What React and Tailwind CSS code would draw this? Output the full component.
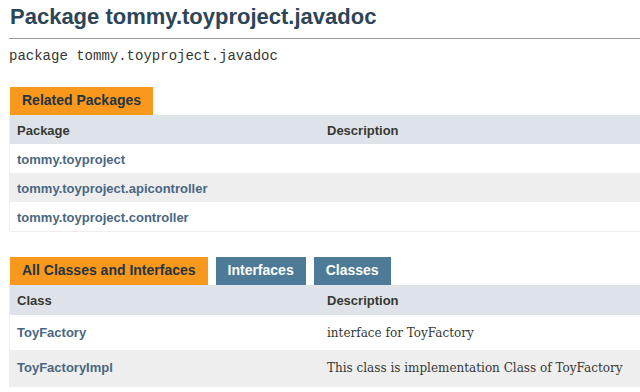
export default function App() {
  const sans = { fontFamily: '"Liberation Sans", Arial, sans-serif' };
  return (
    <div className="w-[640px] h-[392px] overflow-hidden bg-white pl-[9px]" style={sans}>
      <h1 className="mt-[6px] pl-[1px] text-[22px] leading-[22px] font-bold text-[#2c4557] whitespace-nowrap">
        Package tommy.toyproject.javadoc
      </h1>
      <div className="mt-[10px] h-px bg-[#9a9a9a] w-[700px]" />
      <div className="mt-[7px] text-[14px] leading-[20px] text-[#353833] whitespace-nowrap font-['Liberation_Mono',monospace]">
        package tommy.toyproject.javadoc
      </div>

      <div className="mt-[21px] flex pl-[1px]">
        <div className="h-[28px] px-[12px] pt-[5px] text-[14px] leading-[16px] font-bold bg-[#f8981d] text-[#253441] whitespace-nowrap">
          Related Packages
        </div>
      </div>
      <div className="w-[720px] border-l border-b border-[#eeeeee]">
        <div className="grid grid-cols-[310px_1fr] h-[29px] bg-[#dee3e9] text-[13px] leading-[15px] font-bold text-[#353833]">
          <div className="pl-[7px] pt-[8px]">Package</div>
          <div className="pl-[7px] pt-[8px]">Description</div>
        </div>
        {[
          ['tommy.toyproject', 'bg-white'],
          ['tommy.toyproject.apicontroller', 'bg-[#eeeeef]'],
          ['tommy.toyproject.controller', 'bg-white'],
        ].map(([name, bg]) => (
          <div key={name} className={`grid grid-cols-[310px_1fr] h-[29px] ${bg} text-[13px] leading-[15px] font-bold text-[#4a6782]`}>
            <div className="pl-[7px] pt-[8px] whitespace-nowrap">{name}</div>
            <div />
          </div>
        ))}
      </div>

      <div className="mt-[25px] flex gap-[8px] pl-[1px]">
        <div className="h-[28px] px-[12px] pt-[5px] text-[14px] leading-[16px] font-bold bg-[#f8981d] text-[#253441] whitespace-nowrap">
          All Classes and Interfaces
        </div>
        <div className="h-[28px] px-[12px] pt-[5px] text-[14px] leading-[16px] font-bold bg-[#4d7a97] text-white whitespace-nowrap">
          Interfaces
        </div>
        <div className="h-[28px] px-[12px] pt-[5px] text-[14px] leading-[16px] font-bold bg-[#4d7a97] text-white whitespace-nowrap">
          Classes
        </div>
      </div>
      <div className="w-[720px] border-l border-b border-[#eeeeee]">
        <div className="grid grid-cols-[310px_1fr] h-[30px] bg-[#dee3e9] text-[13px] leading-[15px] font-bold text-[#353833]">
          <div className="pl-[7px] pt-[8px]">Class</div>
          <div className="pl-[7px] pt-[8px]">Description</div>
        </div>
        {[
          ['ToyFactory', 'interface for ToyFactory', 'bg-white', 'h-[35px]'],
          ['ToyFactoryImpl', 'This class is implementation Class of ToyFactory', 'bg-[#eeeeef]', 'h-[36px]'],
        ].map(([name, desc, bg, h]) => (
          <div key={name} className={`grid grid-cols-[310px_1fr] ${h} ${bg}`}>
            <div className="pl-[7px] pt-[10px] text-[13px] leading-[15px] font-bold text-[#4a6782] whitespace-nowrap">{name}</div>
            <div className="pl-[7px] pt-[9px] text-[12px] leading-[18px] text-[#353833] whitespace-nowrap font-['DejaVu_Serif',Georgia,serif]">{desc}</div>
          </div>
        ))}
      </div>
    </div>
  );
}
